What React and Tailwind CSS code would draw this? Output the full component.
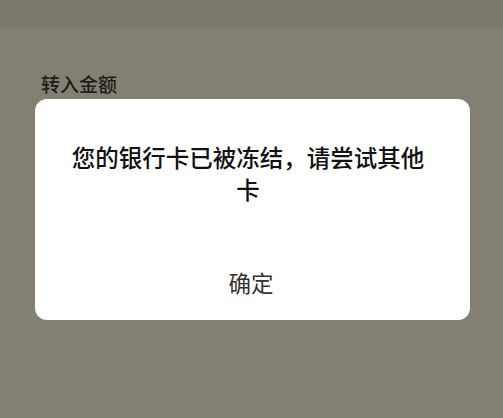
export default function App() {
  const font = { fontFamily: '"Noto Sans CJK SC", "Noto Sans", sans-serif' };
  return (
    <div className="w-[503px] h-[418px] bg-[#838073] flex flex-col overflow-hidden" style={font}>
      <div className="h-[28px] bg-[#7c796c] shrink-0" />
      <div className="pl-[41px] pt-[43px] h-[71px] text-[19px] leading-[26px] font-medium text-[#1e1d19]">转入金额</div>
      <div className="ml-[35px] w-[435px] h-[221px] bg-white rounded-[12px] flex flex-col">
        <div className="pt-[42px] pl-[32px] pr-[41px] text-center text-[23.5px] leading-[32px] font-medium text-[#111111]">
          您的银行卡已被冻结，请尝试其他卡
        </div>
        <div className="mt-[61px] text-center text-[22.5px] leading-[32px] text-[#333333] pr-[3px]">确定</div>
      </div>
    </div>
  );
}
